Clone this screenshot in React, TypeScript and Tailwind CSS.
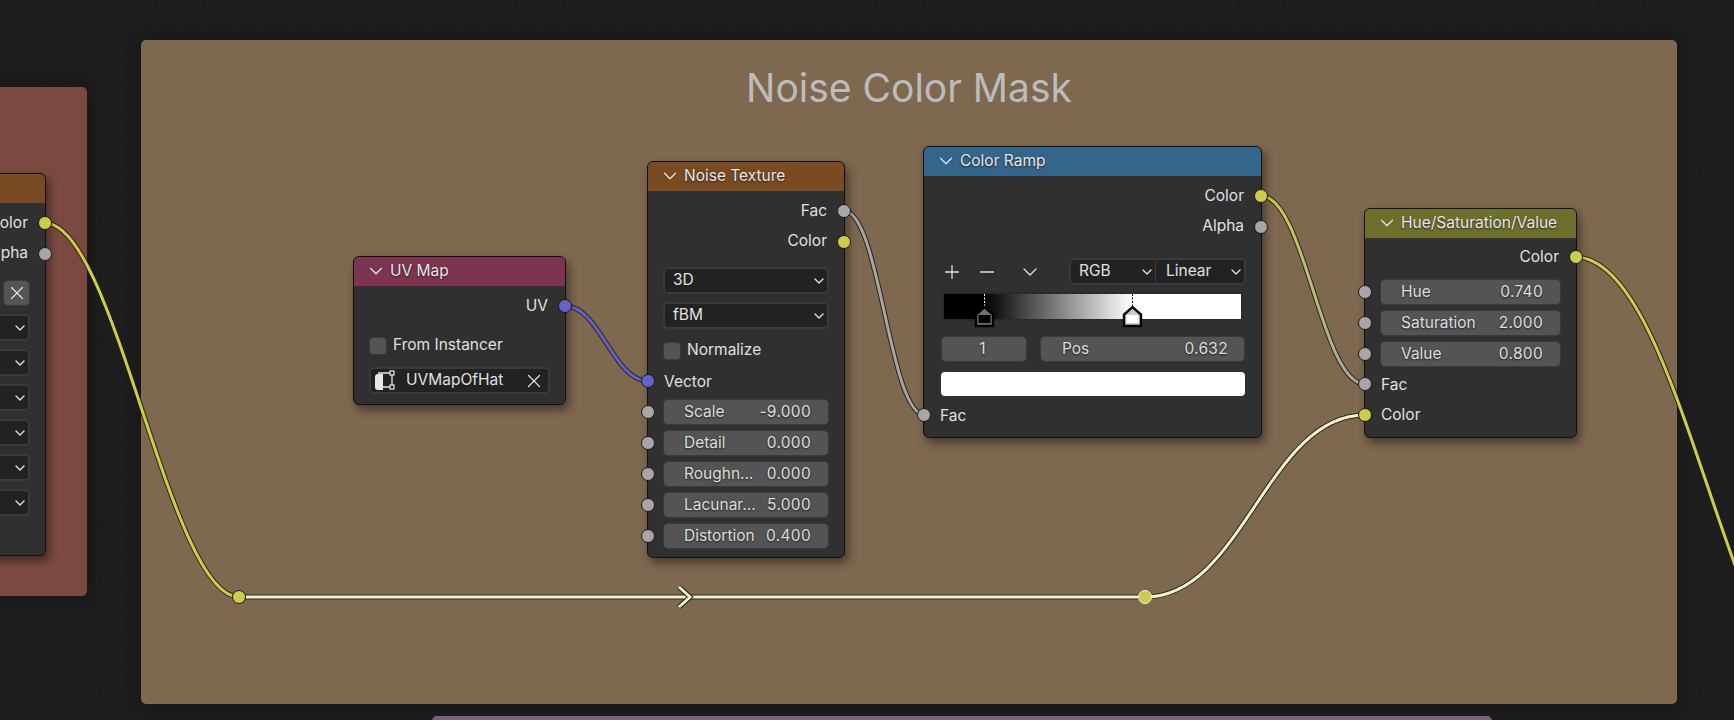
import React from "react";
import { ChevronDown, Minus, Plus, X } from "lucide-react";

const yellow = "bg-[#cccc4d]";
const grey = "bg-[#a6a6a6]";
const blue = "bg-[#6363c7]";

const Socket = ({ color, side }: { color: string; side: "left" | "right" }) => (
  <span
    className={`absolute top-1/2 z-10 h-[14px] w-[14px] -translate-y-1/2 rounded-full border border-[#1a1a1a] ${color} ${
      side === "left" ? "-left-[7px]" : "-right-[7px]"
    }`}
  />
);

const Output = ({ label, color }: { label: string; color: string }) => (
  <div className="relative flex h-[30.5px] items-center justify-end pb-[2px] pr-[17px]">
    <span>{label}</span>
    <Socket color={color} side="right" />
  </div>
);

const Input = ({ label, color }: { label: string; color: string }) => (
  <div className="relative flex h-[30.5px] items-center pl-[16px]">
    <span>{label}</span>
    <Socket color={color} side="left" />
  </div>
);

const Slider = ({ label, value, color }: { label: string; value: string; color?: string }) => (
  <div className="relative h-[26px] shrink-0">
    {color && <Socket color={color} side="left" />}
    <div className="mx-[15px] flex h-[26px] items-center justify-between rounded-[5px] border border-[#3a3a3a] bg-[#545454] pb-[1px] pl-[20px] pr-[17px] text-[#dcdcdc] [text-shadow:0_1px_2px_#222]">
      <span>{label}</span>
      <span className="tracking-[0.3px]">{value}</span>
    </div>
  </div>
);

const Dropdown = ({ label }: { label: string }) => (
  <div className="mx-[15px] flex h-[27px] items-center justify-between rounded-[5px] border-2 border-[#3a3a3a] bg-[#222222] pl-[8px]">
    <span className="pb-[2px]">{label}</span>
    <ChevronDown size={16} strokeWidth={2} />
  </div>
);

const Checkbox = ({ label }: { label: string }) => (
  <div className="mx-[15px] flex h-[19px] items-center gap-[6px]">
    <span className="h-[18px] w-[18px] rounded-[4px] border border-[#3a3a3a] bg-[#545454]" />
    <span className="pb-[1px]">{label}</span>
  </div>
);

const Node = ({
  title,
  header,
  className,
  children,
}: {
  title: string;
  header: string;
  className: string;
  children: React.ReactNode;
}) => (
  <div
    className={`absolute rounded-[6px] border border-[#111111] bg-[#303030] text-[15.5px] leading-none text-[#e0e0e0] shadow-[3px_5px_10px_rgba(0,0,0,0.45)] ${className}`}
  >
    <div
      className={`flex h-[29px] items-center gap-[3px] rounded-t-[5px] pb-[2px] pl-[11px] text-[#e6e6e6] [text-shadow:0_1px_2px_#222] ${header}`}
    >
      <ChevronDown size={22} strokeWidth={1.3} className="shrink-0" />
      <span>{title}</span>
    </div>
    {children}
  </div>
);

const Wire = ({ d, color }: { d: string; color: string }) => (
  <>
    <path d={d} fill="none" stroke="#1c1c14" strokeOpacity={0.85} strokeWidth={5} />
    <path d={d} fill="none" stroke={color} strokeWidth={3} />
  </>
);

const Wires = () => (
  <svg className="absolute left-0 top-0" width={1734} height={720}>
    <defs>
      <linearGradient
        id="rampToFac"
        gradientUnits="userSpaceOnUse"
        x1={1261}
        y1={196}
        x2={1365}
        y2={384}
      >
        <stop offset="0" stopColor="#cccc4d" />
        <stop offset="1" stopColor="#a6a6a6" />
      </linearGradient>
    </defs>
    <Wire d="M45 223 C115 223 169 597 239 597" color="#cccc4d" />
    <Wire d="M239 597 L1145 597" color="#f1f1cd" />
    <Wire d="M1145 597 C1243 597 1267 415 1365 415" color="#f1f1cd" />
    <Wire d="M565 306 C600 306 613 381 648 381" color="#6363c7" />
    <Wire d="M844 211 C880 211 889 415 925 415" color="#a6a6a6" />
    <Wire d="M1261 196 C1305 196 1321 384 1365 384" color="url(#rampToFac)" />
    <Wire d="M1575 257 C1685 257 1730 715 1840 715" color="#cccc4d" />
    <path d="M679 587 L690 597 L679 607" fill="none" stroke="#1c1c14" strokeWidth={5} />
    <path d="M679 587 L690 597 L679 607" fill="none" stroke="#f1f1cd" strokeWidth={3} />
    <circle cx={239} cy={597} r={6.5} fill="#cccc4d" stroke="#1a1a1a" />
    <circle cx={1145} cy={597} r={6.5} fill="#cccc4d" stroke="#f1f1cd" />
  </svg>
);

const RampStop = ({ className, selected }: { className: string; selected: boolean }) => (
  <svg className={`absolute top-0 ${className}`} width={21} height={34} viewBox="0 0 21 34">
    <path d="M10.5 0V12" stroke={selected ? "#000000" : "#ffffff"} strokeDasharray="2 1.5" />
    <path
      d="M2 32V20.5L10.5 13L19 20.5V32Z"
      fill={selected ? "#c8c8c8" : "#6f6f6f"}
      stroke="#000000"
      strokeWidth={2.4}
    />
    <rect x={4.5} y={21} width={12} height={8} fill={selected ? "#ffffff" : "#000000"} />
  </svg>
);

export default function App() {
  return (
    <div className="relative h-[720px] w-[1734px] overflow-hidden bg-[#1d1d1d] bg-[radial-gradient(circle,#242424_1px,transparent_1.5px)] bg-[size:27.7px_27.7px] bg-[position:0px_-11px] [font-family:Inter,'Noto_Sans',sans-serif]">
      {/* frames */}
      <div className="absolute left-[-40px] top-[87px] h-[509px] w-[127px] rounded-[5px] bg-[#7a4a40] shadow-[0_0_14px_rgba(0,0,0,0.35)]" />
      <div className="absolute left-[141px] top-[40px] flex h-[664px] w-[1536px] justify-center rounded-[5px] bg-[#7f6850] shadow-[0_0_14px_rgba(0,0,0,0.35)]">
        <span className="mt-[24px] text-[39px] leading-[47px] text-[#bcbcbc]">Noise Color Mask</span>
      </div>
      <div className="absolute left-[432px] top-[716px] h-[20px] w-[1060px] rounded-[5px] bg-[#7e6079]" />

      <Wires />

      {/* node cut off by the left edge */}
      <Node title="" header="bg-[#774a22]" className="left-[-200px] top-[173px] h-[383px] w-[246px]">
        <div className="mt-[5px] flex flex-col">
          <Output label="Color" color={yellow} />
          <Output label="Alpha" color={grey} />
          <div className="mr-[15px] mt-[11px] flex h-[26px] justify-end">
            <div className="flex w-[27px] items-center justify-center rounded-[5px] border border-[#3a3a3a] bg-[#545454]">
              <X size={22} strokeWidth={1.3} />
            </div>
          </div>
          <div className="mt-[8px] flex flex-col gap-[8px]">
            <Dropdown label="" />
            <Dropdown label="" />
            <Dropdown label="" />
            <Dropdown label="" />
            <Dropdown label="" />
            <Dropdown label="" />
          </div>
        </div>
      </Node>

      <Node title="UV Map" header="bg-[#7d3450]" className="left-[353px] top-[256px] h-[149px] w-[213px]">
        <div className="mt-[5px] flex flex-col">
          <Output label="UV" color={blue} />
          <div className="mt-[14.5px]">
            <Checkbox label="From Instancer" />
          </div>
          <div className="mx-[15px] mt-[12px] flex h-[27px] items-center rounded-[5px] border-2 border-[#3a3a3a] bg-[#222222] pl-[3px] pr-[3px]">
            <svg width={21} height={23} viewBox="0 0 21 23" fill="none" className="shrink-0">
              <path d="M1 8a3 3 0 0 1 3-3h5v16H4a3 3 0 0 1-3-3Z" fill="#e6e6e6" />
              <path d="M4 4h12M18 6v10M9 18h7" stroke="#e6e6e6" strokeWidth={1.3} />
              <rect x={16} y={2} width={4} height={4} stroke="#e6e6e6" strokeWidth={1.2} />
              <rect x={16} y={16} width={4} height={4} stroke="#e6e6e6" strokeWidth={1.2} />
            </svg>
            <span className="ml-[11px] flex-1 pb-[2px]">UVMapOfHat</span>
            <X size={22} strokeWidth={1.3} className="shrink-0" />
          </div>
        </div>
      </Node>

      <Node title="Noise Texture" header="bg-[#7a4b23]" className="left-[647px] top-[161px] h-[397px] w-[198px]">
        <div className="mt-[5px] flex flex-col">
          <Output label="Fac" color={grey} />
          <Output label="Color" color={yellow} />
          <div className="mt-[10px] flex flex-col gap-[8px]">
            <Dropdown label="3D" />
            <Dropdown label="fBM" />
          </div>
          <div className="mt-[12px]">
            <Checkbox label="Normalize" />
          </div>
          <div className="mt-[6px]">
            <Input label="Vector" color={blue} />
          </div>
          <div className="mt-[2.5px] flex flex-col gap-[5px]">
            <Slider label="Scale" value="-9.000" color={grey} />
            <Slider label="Detail" value="0.000" color={grey} />
            <Slider label="Roughn..." value="0.000" color={grey} />
            <Slider label="Lacunar..." value="5.000" color={grey} />
            <Slider label="Distortion" value="0.400" color={grey} />
          </div>
        </div>
      </Node>

      <Node title="Color Ramp" header="bg-[#34658a]" className="left-[923px] top-[146px] h-[292px] w-[339px]">
        <div className="mt-[5px] flex flex-col">
          <Output label="Color" color={yellow} />
          <Output label="Alpha" color={grey} />
          <div className="mt-[16px] flex h-[27px] items-center pl-[17px] pr-[15px]">
            <Plus size={22} strokeWidth={1.4} className="shrink-0" />
            <Minus size={22} strokeWidth={1.4} className="ml-[13px] shrink-0" />
            <ChevronDown size={24} strokeWidth={1.3} className="ml-[20px] shrink-0" />
            <div className="ml-[27px] flex h-[27px] flex-1 items-center rounded-[5px] border-2 border-[#3a3a3a] bg-[#222222]">
              <div className="flex h-full w-[85px] items-center justify-between border-r border-[#3a3a3a] pl-[8px]">
                <span className="pb-[2px]">RGB</span>
                <ChevronDown size={16} strokeWidth={2} />
              </div>
              <div className="flex h-full flex-1 items-center justify-between pl-[10px]">
                <span className="pb-[2px]">Linear</span>
                <ChevronDown size={16} strokeWidth={2} />
              </div>
            </div>
          </div>
          <div className="relative mx-[20px] mt-[9px] h-[25px] bg-[linear-gradient(90deg,#000000_0%,#000000_13.4%,#ffffff_63.2%,#ffffff_100%)] outline outline-2 outline-[#2a2a2a]">
            <RampStop className="left-[30px]" selected={false} />
            <RampStop className="left-[178px]" selected />
          </div>
          <div className="ml-[17px] mr-[16px] mt-[17px] flex gap-[13px]">
            <div className="flex h-[26px] w-[86px] items-center justify-center rounded-[5px] border border-[#3a3a3a] bg-[#545454] pb-[1px] pr-[3px] text-[#dcdcdc] [text-shadow:0_1px_2px_#222]">
              1
            </div>
            <div className="flex h-[26px] flex-1 items-center justify-between rounded-[5px] border border-[#3a3a3a] bg-[#545454] pb-[1px] pl-[21px] pr-[16px] text-[#dcdcdc] [text-shadow:0_1px_2px_#222]">
              <span>Pos</span>
              <span className="tracking-[0.3px]">0.632</span>
            </div>
          </div>
          <div className="ml-[17px] mr-[16px] mt-[10px] h-[24px] rounded-[4px] bg-white" />
          <div className="mt-[4px]">
            <Input label="Fac" color={grey} />
          </div>
        </div>
      </Node>

      <Node title="Hue/Saturation/Value" header="bg-[#6f6f2d]" className="left-[1364px] top-[208px] h-[230px] w-[213px]">
        <div className="mt-[4px] flex flex-col">
          <Output label="Color" color={yellow} />
          <div className="mt-[6.5px] flex flex-col gap-[5px]">
            <Slider label="Hue" value="0.740" color={grey} />
            <Slider label="Saturation" value="2.000" color={grey} />
            <Slider label="Value" value="0.800" color={grey} />
          </div>
          <div className="mt-[2px]">
            <Input label="Fac" color={grey} />
            <Input label="Color" color={yellow} />
          </div>
        </div>
      </Node>
    </div>
  );
}
